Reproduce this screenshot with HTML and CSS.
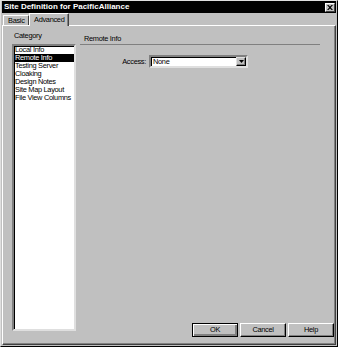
FILE: index.html
```html
<!DOCTYPE html>
<html>
<head>
<meta charset="utf-8">
<link rel="stylesheet" href="styles.css">
</head>
<body>
<div class="window">
  <div class="titlebar">
    <span class="title">Site Definition for PacificAlliance</span>
    <span class="close"><svg width="6" height="5" viewBox="0 0 6 5"><path d="M0 0h1.5l1.5 1.6 1.5-1.6h1.5l-2.2 2.5 2.2 2.5h-1.5l-1.5-1.6-1.5 1.6h-1.5l2.2-2.5z" fill="#000"/></svg></span>
  </div>
  <div class="tabs">
    <div class="tab">Basic</div>
    <div class="tab active">Advanced</div>
  </div>
  <div class="panel">
    <div class="left">
      <div class="label">Category</div>
      <ul class="list">
        <li>Local Info</li>
        <li class="sel">Remote Info</li>
        <li>Testing Server</li>
        <li>Cloaking</li>
        <li>Design Notes</li>
        <li>Site Map Layout</li>
        <li>File View Columns</li>
      </ul>
    </div>
    <div class="right">
      <div class="header">Remote Info</div>
      <div class="row">
        <div class="rowlabel">Access:</div>
        <div class="select">
          <span class="value">None</span>
          <span class="arrow"><svg width="5" height="3" viewBox="0 0 5 3"><path d="M0 0h5l-2.5 3z" fill="#000"/></svg></span>
        </div>
      </div>
      <div class="buttons">
        <div class="btn default">OK</div>
        <div class="btn">Cancel</div>
        <div class="btn">Help</div>
      </div>
    </div>
  </div>
</div>
</body>
</html>
```
FILE: styles.css
```css
* { box-sizing: border-box; }
html, body { margin: 0; padding: 0; background: #c0c0c0; }
body {
  font-family: "Liberation Sans", Arial, sans-serif;
  font-size: 7.4px;
  letter-spacing: -0.3px;
  color: #000;
}
.window {
  width: 338px;
  height: 347px;
  background: #c0c0c0;
  border: 1px solid;
  border-color: #dfdfdf #000 #000 #dfdfdf;
  padding: 0 1px 1px 1px;
  display: flex;
  flex-direction: column;
}
.titlebar {
  height: 12px;
  background: #000;
  display: flex;
  align-items: center;
  justify-content: space-between;
  padding: 0 1px 0 2px;
}
.title {
  color: #fff;
  font-weight: bold;
  font-size: 8px;
  letter-spacing: 0;
  line-height: 12px;
}
.close {
  width: 10px;
  height: 9px;
  background: #c0c0c0;
  border: 1px solid;
  border-color: #fff #404040 #404040 #fff;
  display: flex;
  align-items: center;
  justify-content: center;
}
.close svg { display: block; }
.tabs {
  height: 12px;
  display: flex;
  align-items: flex-end;
  padding-left: 1px;
}
.tab {
  height: 10px;
  width: 26px;
  padding-left: 4px;
  line-height: 9px;
  border-top: 1px solid #fff;
  border-left: 1px solid #fff;
  border-right: 1px solid #404040;
  border-radius: 1px 1px 0 0;
  background: #c0c0c0;
}
.tab.active {
  position: relative;
  height: 13px;
  width: 40px;
  margin-bottom: -1px;
  padding-left: 4px;
  line-height: 11px;
  box-shadow: inset -1px 0 #808080;
}
.panel {
  flex: 1;
  border: 1px solid;
  border-color: #fff #404040 #404040 #fff;
  box-shadow: inset -1px -1px #808080;
  display: flex;
  padding: 0 1px 0 9px;
}
.left {
  width: 64px;
  padding-top: 6px;
  display: flex;
  flex-direction: column;
}
.label { line-height: 8px; height: 8px; padding-left: 2px; }
.list {
  margin: 4px 0 0 0;
  padding: 0;
  list-style: none;
  height: 287px;
  background: #fff;
  border: 2px solid;
  border-color: #808080 #dfdfdf #dfdfdf #808080;
  box-shadow: inset 1px 1px #000;
}
.list li {
  height: 8px;
  line-height: 8px;
  padding-left: 1px;
  margin-left: 0;
  white-space: nowrap;
}
.list li.sel { background: #000; color: #fff; }
.right {
  flex: 1;
  margin-left: 4px;
  padding-top: 9px;
  padding-bottom: 7px;
  display: flex;
  flex-direction: column;
}
.header {
  line-height: 8px;
  height: 10px;
  padding-left: 4px;
  border-bottom: 1px solid #808080;
  margin-right: 14px;
}
.row {
  margin-top: 10px;
  display: flex;
  align-items: center;
}
.rowlabel {
  width: 67px;
  text-align: right;
  padding-right: 1px;
}
.select {
  margin-left: 2px;
  width: 99px;
  height: 13px;
  background: #fff;
  border: 2px solid;
  border-color: #808080 #dfdfdf #dfdfdf #808080;
  box-shadow: inset 1px 1px #000;
  display: flex;
  align-items: center;
  justify-content: space-between;
  padding-left: 2px;
}
.value { line-height: 9px; }
.arrow {
  width: 10px;
  height: 9px;
  background: #c0c0c0;
  border: 1px solid;
  border-color: #dfdfdf #000 #000 #dfdfdf;
  box-shadow: inset -1px -1px #808080;
  display: flex;
  align-items: center;
  justify-content: center;
}
.arrow svg { display: block; }
.buttons {
  margin-top: auto;
  display: flex;
  justify-content: flex-end;
  gap: 1px;
}
.btn {
  width: 46px;
  height: 14px;
  border: 1px solid;
  border-color: #fff #000 #000 #fff;
  box-shadow: inset -1px -1px #808080;
  text-align: center;
  line-height: 12px;
}
.btn.default {
  border-color: #000;
  box-shadow: inset 1px 1px #fff, inset -2px -2px #808080, inset -1px -1px #000;
}
.btn + .btn { margin-left: 1px; }
```
